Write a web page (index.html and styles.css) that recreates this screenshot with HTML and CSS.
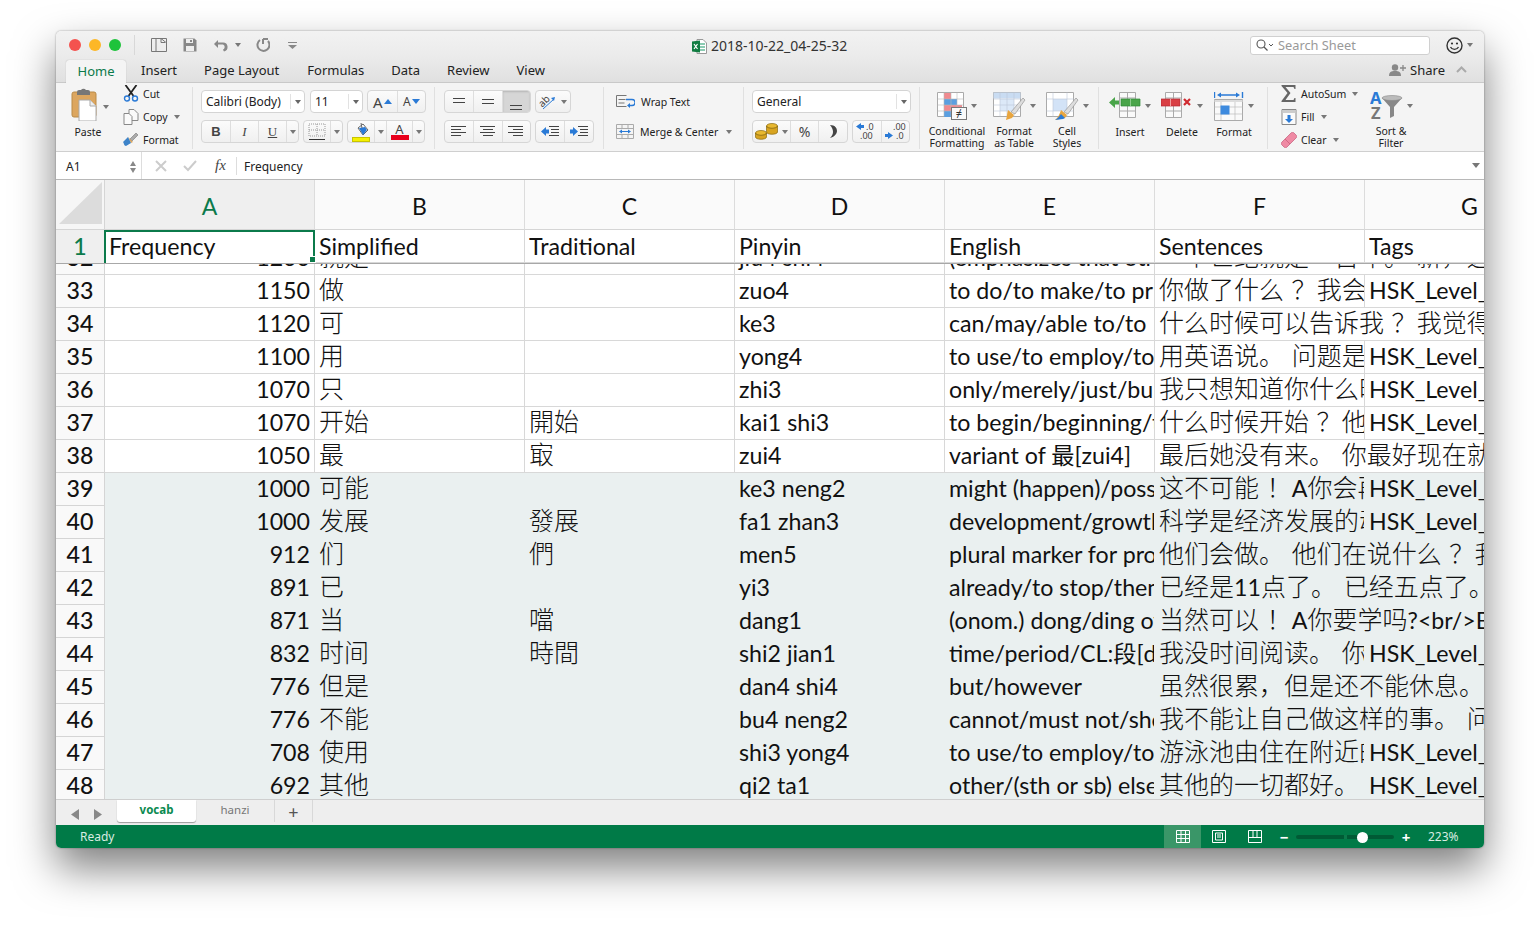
FILE: index.html
```html
<!DOCTYPE html>
<html lang="zh-CN">
<head>
  <meta charset="utf-8" />
  <title>2018-10-22_04-25-32</title>
  <link rel="stylesheet" href="styles.css">
</head>
<body>
<div class="window">

  <div class="titlebar">
    <div class="lights">
      <span class="light red"></span><span class="light yellow"></span><span class="light green"></span>
    </div>
    <div class="quick">
      <svg width="16" height="14" viewBox="0 0 16 14"><path d="M.5.5h15v13H.5zM5 .5v13M10 .5v4l4 0M10 .5l5 4" fill="none" stroke="#777"/></svg>
      <svg class="q-save" width="14" height="14" viewBox="0 0 14 14"><path d="M.5.5h11l2 2v11H.5z" fill="#888"/><path d="M3 1h7v4H3z" fill="#eee"/><path d="M3 8h8v5H3z" fill="#eee"/><path d="M7 2h2v2H7z" fill="#888"/></svg>
      <svg class="q-undo" width="16" height="13" viewBox="0 0 16 13"><path d="M1 5l4-4v2.6h5a4.500 4.500 0 0 1 1 8.900l-1-1.700a3 3 0 0 0 0-5.400H5V9z" fill="#888"/></svg>
      <span class="caret q-caret"></span>
      <svg class="q-redo" width="15" height="15" viewBox="0 0 15 15"><path d="M8 1v5M8 1h5M13 3a6 6 0 1 1-8-1" fill="none" stroke="#888" stroke-width="2"/></svg>
      <svg class="q-more" width="9" height="7" viewBox="0 0 9 7"><path d="M0 0h9v1H0zM0 3h9L4.500 7z" fill="#888"/></svg>
    </div>
    <div class="doc-title">
      <svg width="15" height="15" viewBox="0 0 15 15"><path d="M5 .5h6l3.500 3.500v10.500H5z" fill="#fff" stroke="#999"/><path d="M8 5h5M8 8h5M8 11h5" stroke="#6b9" stroke-width="1.500"/><path d="M0 2.500l8-1v12l-8-1z" fill="#107c41"/><path d="M2 5l3.500 5M5.500 5L2 10" stroke="#fff" stroke-width="1.200"/></svg>
      <span>2018-10-22_04-25-32</span>
    </div>
    <div class="title-right">
      <div class="search">
        <svg width="17" height="12" viewBox="0 0 17 12"><circle cx="5" cy="5" r="4" fill="none" stroke="#555" stroke-width="1.100"/><path d="M8 8l3.500 3.500" stroke="#555" stroke-width="1.300"/><path d="M13 5l2 2 2-2" fill="none" stroke="#555"/></svg>
        <span>Search Sheet</span>
      </div>
      <svg class="smile" width="17" height="17" viewBox="0 0 17 17"><circle cx="8.500" cy="8.500" r="7.500" fill="none" stroke="#333" stroke-width="1.400"/><circle cx="6" cy="6.500" r="1.100" fill="#333"/><circle cx="11" cy="6.500" r="1.100" fill="#333"/><path d="M4.500 10a4.500 4.500 0 0 0 8 0" fill="none" stroke="#333" stroke-width="1.300"/></svg>
      <span class="caret"></span>
    </div>
  </div>

  <div class="tabbar">
    <div class="tab active">Home</div>
    <div class="tab t-insert">Insert</div>
    <div class="tab t-layout">Page Layout</div>
    <div class="tab t-formulas">Formulas</div>
    <div class="tab t-data">Data</div>
    <div class="tab t-review">Review</div>
    <div class="tab t-view">View</div>
    <div class="share">
      <svg width="17" height="12" viewBox="0 0 17 12"><circle cx="6" cy="3.500" r="3.200" fill="#888"/><path d="M0 12c0-4 2-5 6-5s6 1 6 5z" fill="#888"/><path d="M14 1v6M11 4h6" stroke="#888" stroke-width="1.300"/></svg>
      <span>Share</span>
      <svg class="chev" width="11" height="7" viewBox="0 0 11 7"><path d="M1 6l4.500-4.500L10 6" fill="none" stroke="#aaa" stroke-width="2"/></svg>
    </div>
  </div>

  <div class="ribbon">
    <!-- clipboard -->
    <div class="group g-clip">
      <div class="big paste">
        <div class="big-icon">
          <svg width="26" height="34" viewBox="0 0 26 34"><rect x="1" y="5" width="24" height="25" rx="2" fill="#dca65f" stroke="#b98a48"/><path d="M6 5a2 2 0 0 1 2-2h2a3 3 0 0 1 5 0h2a2 2 0 0 1 2 2v3H6z" fill="#777"/><path d="M8 13h11l6 6v15H8z" fill="#fff" stroke="#aaa"/><path d="M19 13v6h6" fill="#eee" stroke="#aaa"/></svg>
        </div>
        <div class="label">Paste</div>
      </div>
      <span class="caret paste-caret"></span>
      <div class="stack">
        <div class="item"><svg width="15" height="17" viewBox="0 0 15 17"><path d="M2 0l8 11M13 0L5 11" stroke="#222" stroke-width="1.800"/><circle cx="3.500" cy="13.500" r="2.500" fill="none" stroke="#2a7ad6" stroke-width="1.400"/><circle cx="11.500" cy="13.500" r="2.500" fill="none" stroke="#2a7ad6" stroke-width="1.400"/></svg><span>Cut</span></div>
        <div class="item"><svg width="15" height="16" viewBox="0 0 15 16"><path d="M5.500.5h5l4 4v7h-9z" fill="#fafafa" stroke="#888"/><path d="M.5 4.500h5l3 3v8h-8z" fill="#fafafa" stroke="#888"/></svg><span>Copy</span><span class="caret"></span></div>
        <div class="item"><svg width="16" height="15" viewBox="0 0 16 15"><path d="M7 7l6-6 2 2-6 6z" fill="#aaa" stroke="#777" stroke-width=".6"/><path d="M5 5l5 5-2 1z" fill="#dca65f"/><path d="M5 5L0 10c1 1 1 4 3 4l5-3z" fill="#3d83c9"/></svg><span>Format</span></div>
      </div>
    </div>

    <!-- font -->
    <div class="group g-font">
      <div class="tools">
        <div class="select w-font"><span>Calibri (Body)</span><i class="sel-arrow"></i></div>
        <div class="select w-size"><span>11</span><i class="sel-arrow"></i></div>
        <div class="btns">
          <div class="b w-grow"><span class="aa big-a">A</span><i class="tri up"></i></div>
          <div class="b w-grow"><span class="aa">A</span><i class="tri down"></i></div>
        </div>
      </div>
      <div class="tools">
        <div class="btns">
          <div class="b w28 fmt"><b>B</b></div>
          <div class="b w28 fmt"><em>I</em></div>
          <div class="b w28 fmt"><u>U</u></div>
          <div class="b w12"><span class="caret"></span></div>
        </div>
        <div class="btns">
          <div class="b w26"><svg width="18" height="18" viewBox="0 0 18 18"><path d="M1 1h16v12H1zM9 1v12M1 7h16" fill="none" stroke="#999" stroke-dasharray="1 1"/><path d="M1 16.500h16" stroke="#333"/></svg></div>
          <div class="b w12"><span class="caret"></span></div>
        </div>
        <div class="btns">
          <div class="b w26"><svg width="18" height="20" viewBox="0 0 18 20"><path d="M6 6l5-4 5 6-5 5z" fill="#fff" stroke="#666"/><path d="M7 6l6-1 2 3-4 5z" fill="#2a7ad6"/><path d="M9 1l1 5" stroke="#666"/><rect x=".5" y="15.500" width="17" height="4" fill="#f5f000" stroke="#c8c400"/></svg></div>
          <div class="b w12"><span class="caret"></span></div>
          <div class="b w26 color-a"><span class="a-red">A</span><i class="red-bar"></i></div>
          <div class="b w12"><span class="caret"></span></div>
        </div>
      </div>
    </div>

    <!-- alignment -->
    <div class="group g-align">
      <div class="tools">
        <div class="btns">
          <div class="b w29"><svg width="14" height="8" viewBox="0 0 14 8"><path d="M1 .5h12M1 4.500h12" stroke="#444"/></svg></div>
          <div class="b w29"><svg width="14" height="6" viewBox="0 0 14 6"><path d="M1 .5h12M1 4.500h12" stroke="#444"/></svg></div>
          <div class="b w29 pressed"><svg class="low" width="14" height="8" viewBox="0 0 14 8"><path d="M1 3.500h12M1 7.500h12" stroke="#444"/></svg></div>
        </div>
        <div class="btns">
          <div class="b w36"><svg width="19" height="16" viewBox="0 0 19 16"><text class="ab" x="0" y="10" transform="rotate(-45 6 8)">ab</text><path d="M4 15L15 5" stroke="#2a7ad6"/><path d="M16 3l-1 4-3-3z" fill="#2a7ad6"/></svg><span class="caret"></span></div>
        </div>
      </div>
      <div class="tools">
        <div class="btns">
          <div class="b w29"><svg width="16" height="11" viewBox="0 0 16 11"><path d="M0 .5h15M0 3.500h10M0 6.500h15M0 9.500h10" stroke="#444"/></svg></div>
          <div class="b w29"><svg width="16" height="11" viewBox="0 0 16 11"><path d="M0 .5h15M3 3.500h10M0 6.500h15M3 9.500h10" stroke="#444"/></svg></div>
          <div class="b w29"><svg width="16" height="11" viewBox="0 0 16 11"><path d="M0 .5h15M5 3.500h10M0 6.500h15M5 9.500h10" stroke="#444"/></svg></div>
        </div>
        <div class="btns">
          <div class="b w29"><svg width="18" height="11" viewBox="0 0 18 11"><path d="M0 5.500L5 1v2.500h3v4H5V10z" fill="#2a7ad6"/><path d="M8 .5h10M10 3.500h8M10 6.500h8M8 9.500h10" stroke="#444"/></svg></div>
          <div class="b w29"><svg width="18" height="11" viewBox="0 0 18 11"><path d="M8 5.500L3 1v2.500H0v4h3V10z" fill="#2a7ad6"/><path d="M8 .5h10M10 3.500h8M10 6.500h8M8 9.500h10" stroke="#444"/></svg></div>
        </div>
      </div>
    </div>

    <!-- wrap and merge -->
    <div class="group g-wrap">
      <div class="wide-item"><svg width="19" height="13" viewBox="0 0 19 13"><path d="M.5.5h10M.5.5v11h10M2.500 4.500h7M2.500 8h6" fill="none" stroke="#777"/><path d="M10 4.500h6a2.500 2.500 0 0 1 0 6h-3" fill="none" stroke="#2a7ad6" stroke-width="1.300"/><path d="M14 8v5l-3-2.500z" fill="#2a7ad6"/></svg><span>Wrap Text</span></div>
      <div class="wide-item"><svg width="18" height="15" viewBox="0 0 18 15"><path d="M.5.5h17v14H.5zM.5 4.500h17M.5 10.500h17M6 .5v4M12 .5v4M6 10.500v4M12 10.500v4" fill="none" stroke="#aaa"/><path d="M4 7.500h10" stroke="#2a7ad6"/><path d="M3 7.500l3-2v4zM15 7.500l-3-2v4z" fill="#2a7ad6"/></svg><span>Merge &amp; Center</span><span class="caret"></span></div>
    </div>

    <!-- number -->
    <div class="group g-number">
      <div class="tools">
        <div class="select w-general"><span>General</span><i class="sel-arrow"></i></div>
      </div>
      <div class="tools">
        <div class="btns">
          <div class="b w38 coins"><svg width="23" height="17" viewBox="0 0 23 17"><ellipse cx="17" cy="3" rx="5.500" ry="2.500" fill="#e8b830" stroke="#8a6a10" stroke-width=".7"/><path d="M11.500 3v6c0 3 11 3 11 0V3c0 3-11 3-11 0z" fill="#d8a420" stroke="#8a6a10" stroke-width=".7"/><ellipse cx="6" cy="10" rx="5.500" ry="2.500" fill="#e8b830" stroke="#8a6a10" stroke-width=".7"/><path d="M.5 10v4c0 3 11 3 11 0v-4c0 3-11 3-11 0z" fill="#d8a420" stroke="#8a6a10" stroke-width=".7"/></svg><span class="caret"></span></div>
          <div class="b w29 pct">%</div>
          <div class="b w29"><svg width="8" height="13" viewBox="0 0 8 13"><path d="M1 0c5 0 7 3 7 6 0 3-3 6-7 7 2-2 3-4 3-6S3 2 1 0z" fill="#444"/></svg></div>
        </div>
        <div class="btns">
          <div class="b w29"><svg width="21" height="17" viewBox="0 0 21 17"><path d="M0 3.500L5 0v2h3v3H5v2z" fill="#2a7ad6"/><text class="dec" x="10" y="7">.0</text><text class="dec" x="4" y="16">.00</text></svg></div>
          <div class="b w29"><svg width="21" height="17" viewBox="0 0 21 17"><text class="dec" x="8" y="7">.00</text><path d="M8 12.500L3 9v2H0v3h3v2z" fill="#2a7ad6"/><text class="dec" x="11" y="16">.0</text></svg></div>
        </div>
      </div>
    </div>

    <!-- styles -->
    <div class="group g-styles">
      <div class="big w-cond">
        <div class="big-icon">
          <svg width="30" height="30" viewBox="0 0 30 30"><path d="M.5.500h26v24H.5z" fill="#fff" stroke="#aaa"/><path d="M7 1h7v6H7z" fill="#f08a8f"/><path d="M7 7h13v6H7z" fill="#5b9fe0"/><path d="M7 13h18v6H7z" fill="#f08a8f"/><path d="M7 19h7v6H7z" fill="#5b9fe0"/><path d="M7 .5v24M14 .5v24M20 .5v24M.5 7h26M.5 13h26M.5 19h26" stroke="#bbb" stroke-width=".6"/><rect x="14.500" y="15.500" width="15" height="12" fill="#fafafa" stroke="#777"/><text class="ne" x="22" y="25">≠</text></svg>
          <span class="caret"></span>
        </div>
        <div class="label">Conditional<br>Formatting</div>
      </div>
      <div class="big w-table">
        <div class="big-icon">
          <svg width="33" height="30" viewBox="0 0 33 30"><path d="M.5.500h27v24H.5z" fill="#fff" stroke="#aaa"/><path d="M.5.500h27v6H.5z" fill="#c9dcf2"/><path d="M7 7h14v12H7z" fill="#dce9f8"/><path d="M7 .5v24M14 .5v24M21 .5v24M.5 7h27M.5 13h27M.5 19h27" stroke="#bcc8d6" stroke-width=".6"/><path d="M18 20L30 6l2 2-10 14z" fill="#ddd" stroke="#888" stroke-width=".6"/><path d="M15 18l6 5-2 3-6 2c1-3 1-7 2-10z" fill="#e8a53e"/></svg>
          <span class="caret"></span>
        </div>
        <div class="label">Format<br>as Table</div>
      </div>
      <div class="big w-cell">
        <div class="big-icon">
          <svg width="33" height="30" viewBox="0 0 33 30"><path d="M.5.500h27v24H.5z" fill="#fff" stroke="#aaa"/><path d="M7 7h14v12H7z" fill="#d3e3f7"/><path d="M7 .5v24M21 .5v24M.5 7h27M.5 19h27" stroke="#bcc8d6" stroke-width=".6"/><path d="M18 20L30 6l2 2-10 14z" fill="#ddd" stroke="#888" stroke-width=".6"/><path d="M15 18l6 5-2 3-10 2c3-2 5-7 6-10z" fill="#e8a53e"/><path d="M9 28c2-1 4-3 6-6l4 4-2 1z" fill="#2a7ad6"/></svg>
          <span class="caret"></span>
        </div>
        <div class="label">Cell<br>Styles</div>
      </div>
    </div>

    <!-- cells -->
    <div class="group g-cells">
      <div class="big w-cells">
        <div class="big-icon">
          <svg width="32" height="26" viewBox="0 0 32 26"><path d="M10.500.500h16v25h-16zM18.500.500v25M10.500 6h16M10.500 19h16" fill="#fafafa" stroke="#aaa"/><path d="M12 7h19v7H12z" fill="#4aa54a" stroke="#2f8a37" stroke-width=".7"/><path d="M21.500 7v7" stroke="#8ccb8c"/><path d="M0 10.500L6 5v3.500h4v4H6V16z" fill="#4aa54a"/></svg>
          <span class="caret"></span>
        </div>
        <div class="label">Insert</div>
      </div>
      <div class="big w-cells">
        <div class="big-icon">
          <svg width="32" height="26" viewBox="0 0 32 26"><path d="M4.500.500h16v25h-16zM12.500.500v25M4.500 6h16M4.500 19h16" fill="#fafafa" stroke="#aaa"/><path d="M0 7h19v7H0z" fill="#d94045" stroke="#b52a30" stroke-width=".7"/><path d="M9.500 7v7" stroke="#f0a0a0"/><path d="M23 7l6 6M29 7l-6 6" stroke="#d02a30" stroke-width="2.200"/></svg>
          <span class="caret"></span>
        </div>
        <div class="label">Delete</div>
      </div>
      <div class="big w-cells">
        <div class="big-icon">
          <svg width="30" height="30" viewBox="0 0 30 30"><path d="M.5 0v6M28.500 0v6M5 3h19" stroke="#2a7ad6" stroke-width="1.400"/><path d="M3 3l4-2.500v5zM26 3l-4-2.500v5z" fill="#2a7ad6"/><path d="M.5 7.500h28v21H.5z" fill="#fafafa" stroke="#aaa"/><path d="M.5 8h28v2H.5z" fill="#ddd"/><path d="M7 10v18M21 10v18M.5 15h28M.5 22h28" stroke="#bbb" stroke-width=".7"/><rect x="6.500" y="13.500" width="9" height="9" fill="#3d8ade"/></svg>
          <span class="caret"></span>
        </div>
        <div class="label">Format</div>
      </div>
    </div>

    <!-- editing -->
    <div class="group g-edit">
      <div class="stack edit-stack">
        <div class="item"><svg width="15" height="17" viewBox="0 0 15 17"><path d="M0 0h14v4h-1l-1-2H4l5 6-5 7h8l1-2h1v4H0v-1l6-8-6-7z" fill="#666"/></svg><span>AutoSum</span><span class="caret"></span></div>
        <div class="item"><svg width="15" height="16" viewBox="0 0 15 16"><path d="M.5.500h14v15H.5z" fill="#fafafa" stroke="#888"/><path d="M1 1h13v3H1z" fill="#ccc"/><path d="M6 6h3v4h2.500l-4 4-4-4H6z" fill="#2a7ad6"/></svg><span>Fill</span><span class="caret"></span></div>
        <div class="item"><svg width="16" height="16" viewBox="0 0 16 16"><path d="M1 10L10 1c1-1 2-1 3 0l2 2c1 1 1 2 0 3l-9 9c-1 1-2 1-3 0l-2-2c-1-1-1-2 0-3z" fill="#ef8aa4" stroke="#c35a78" stroke-width=".7"/><path d="M4 7l5 5" stroke="#c35a78" stroke-width=".7"/></svg><span>Clear</span><span class="caret"></span></div>
      </div>
      <div class="big w-sort">
        <div class="big-icon">
          <svg width="33" height="28" viewBox="0 0 33 28"><text class="az blue" x="0" y="12">A</text><text class="az" x="1" y="27">Z</text><path d="M12 6h20l-8 9v9l-4 2V15z" fill="#888"/><ellipse cx="22" cy="6" rx="10" ry="2.500" fill="#bbb" stroke="#888" stroke-width=".6"/></svg>
          <span class="caret"></span>
        </div>
        <div class="label">Sort &amp;<br>Filter</div>
      </div>
    </div>
  </div>

  <div class="formulabar">
    <div class="namebox">
      <span>A1</span>
      <span class="stepper"><i class="tri-up"></i><i class="tri-down"></i></span>
    </div>
    <div class="fb-actions">
      <svg width="12" height="12" viewBox="0 0 12 12"><path d="M1 1l10 10M11 1L1 11" stroke="#ccc" stroke-width="2"/></svg>
      <svg width="14" height="12" viewBox="0 0 14 12"><path d="M1 6l4 4 8-9" fill="none" stroke="#ccc" stroke-width="2"/></svg>
      <span class="fx">fx</span>
    </div>
    <div class="fb-text">Frequency</div>
    <span class="fb-caret"></span>
  </div>

  <div class="colheads">
    <div class="corner"><svg width="48" height="46" viewBox="0 0 48 46"><path d="M46 2v42H3z" fill="#dcdcdc"/></svg></div>
    <div class="ch sel">A</div>
    <div class="ch">B</div>
    <div class="ch">C</div>
    <div class="ch">D</div>
    <div class="ch">E</div>
    <div class="ch">F</div>
    <div class="ch last">G</div>
  </div>

  <div class="row frozen">
    <div class="rh sel">1</div>
    <div class="c a1">Frequency</div>
    <div class="c">Simplified</div>
    <div class="c">Traditional</div>
    <div class="c">Pinyin</div>
    <div class="c">English</div>
    <div class="c">Sentences</div>
    <div class="c g">Tags</div>
  </div>

  <div class="sheet">
    <div class="row partial"><div class="rh">32</div><div class="c num">1200</div><div class="c cjk">就是</div><div class="c"></div><div class="c">jiu4 shi4</div><div class="c">(emphasizes that oth</div><div class="c cjk wide">一个世纪就是一百年。 新，这</div></div>
    <div class="row"><div class="rh">33</div><div class="c num">1150</div><div class="c cjk">做</div><div class="c"></div><div class="c">zuo4</div><div class="c">to do/to make/to pr</div><div class="c cjk">你做了什么<i class="mid">？</i> 我会</div><div class="c g">HSK_Level_1</div></div>
    <div class="row"><div class="rh">34</div><div class="c num">1120</div><div class="c cjk">可</div><div class="c"></div><div class="c">ke3</div><div class="c">can/may/able to/to</div><div class="c cjk wide">什么时候可以告诉我<i class="mid">？</i> 我觉得</div></div>
    <div class="row"><div class="rh">35</div><div class="c num">1100</div><div class="c cjk">用</div><div class="c"></div><div class="c">yong4</div><div class="c">to use/to employ/to</div><div class="c cjk">用英语说。 问题是</div><div class="c g">HSK_Level_1</div></div>
    <div class="row"><div class="rh">36</div><div class="c num">1070</div><div class="c cjk">只</div><div class="c"></div><div class="c">zhi3</div><div class="c">only/merely/just/bu</div><div class="c cjk">我只想知道你什么时候</div><div class="c g">HSK_Level_1</div></div>
    <div class="row"><div class="rh">37</div><div class="c num">1070</div><div class="c cjk">开始</div><div class="c cjk">開始</div><div class="c">kai1 shi3</div><div class="c">to begin/beginning/to</div><div class="c cjk">什么时候开始<i class="mid">？</i> 他</div><div class="c g">HSK_Level_1</div></div>
    <div class="row"><div class="rh">38</div><div class="c num">1050</div><div class="c cjk">最</div><div class="c cjk">㝡</div><div class="c">zui4</div><div class="c">variant of 最[zui4]</div><div class="c cjk wide">最后她没有来。 你最好现在就</div></div>
    <div class="row shade"><div class="rh">39</div><div class="c num">1000</div><div class="c cjk">可能</div><div class="c"></div><div class="c">ke3 neng2</div><div class="c">might (happen)/possible</div><div class="c cjk">这不可能<i class="mid">！</i> <span class="lat">A</span>你会再</div><div class="c g">HSK_Level_1</div></div>
    <div class="row shade"><div class="rh">40</div><div class="c num">1000</div><div class="c cjk">发展</div><div class="c cjk">發展</div><div class="c">fa1 zhan3</div><div class="c">development/growth</div><div class="c cjk">科学是经济发展的动力</div><div class="c g">HSK_Level_1</div></div>
    <div class="row shade"><div class="rh">41</div><div class="c num">912</div><div class="c cjk">们</div><div class="c cjk">們</div><div class="c">men5</div><div class="c">plural marker for pro</div><div class="c cjk wide">他们会做。 他们在说什么<i class="mid">？</i> 我</div></div>
    <div class="row shade"><div class="rh">42</div><div class="c num">891</div><div class="c cjk">已</div><div class="c"></div><div class="c">yi3</div><div class="c">already/to stop/then</div><div class="c cjk wide">已经是<span class="lat">11</span>点了。 已经五点了。</div></div>
    <div class="row shade"><div class="rh">43</div><div class="c num">871</div><div class="c cjk">当</div><div class="c cjk">噹</div><div class="c">dang1</div><div class="c">(onom.) dong/ding of</div><div class="c cjk wide">当然可以<i class="mid">！</i> <span class="lat">A</span>你要学吗<span class="lat">?&lt;br/&gt;B</span>我</div></div>
    <div class="row shade"><div class="rh">44</div><div class="c num">832</div><div class="c cjk">时间</div><div class="c cjk">時間</div><div class="c">shi2 jian1</div><div class="c">time/period/CL:段[duan4]</div><div class="c cjk">我没时间阅读。 你</div><div class="c g">HSK_Level_1</div></div>
    <div class="row shade"><div class="rh">45</div><div class="c num">776</div><div class="c cjk">但是</div><div class="c"></div><div class="c">dan4 shi4</div><div class="c">but/however</div><div class="c cjk wide">虽然很累，但是还不能休息。</div></div>
    <div class="row shade"><div class="rh">46</div><div class="c num">776</div><div class="c cjk">不能</div><div class="c"></div><div class="c">bu4 neng2</div><div class="c">cannot/must not/should</div><div class="c cjk wide">我不能让自己做这样的事。 问</div></div>
    <div class="row shade"><div class="rh">47</div><div class="c num">708</div><div class="c cjk">使用</div><div class="c"></div><div class="c">shi3 yong4</div><div class="c">to use/to employ/to</div><div class="c cjk">游泳池由住在附近的</div><div class="c g">HSK_Level_1</div></div>
    <div class="row shade"><div class="rh">48</div><div class="c num">692</div><div class="c cjk">其他</div><div class="c"></div><div class="c">qi2 ta1</div><div class="c">other/(sth or sb) else</div><div class="c cjk">其他的一切都好。</div><div class="c g">HSK_Level_1</div></div>
  </div>

  <div class="sheetbar">
    <div class="nav">
      <svg width="8" height="11" viewBox="0 0 8 11"><path d="M8 0v11L0 5.500z" fill="#888"/></svg>
      <svg width="8" height="11" viewBox="0 0 8 11"><path d="M0 0v11l8-5.500z" fill="#888"/></svg>
    </div>
    <div class="sheet-tab active">vocab</div>
    <div class="sheet-tab">hanzi</div>
    <div class="sheet-add">+</div>
  </div>

  <div class="statusbar">
    <span class="ready">Ready</span>
    <div class="views">
      <div class="view on"><svg width="14" height="13" viewBox="0 0 14 13"><path d="M.5.500h13v12H.5zM5 .5v12M9.500.500v12M.5 4.500h13M.5 8.500h13" fill="none" stroke="#fff"/></svg></div>
      <div class="view"><svg width="14" height="13" viewBox="0 0 14 13"><path d="M.5.500h13v12H.5z" fill="none" stroke="#fff"/><path d="M3.500 3h7v7h-7zM5 5h4M5 7h4" fill="none" stroke="#fff"/></svg></div>
      <div class="view last"><svg width="14" height="13" viewBox="0 0 14 13"><path d="M.5.500h13v12H.5zM.5 7.500h13M5 .5v7M9 .5v7" fill="none" stroke="#fff"/></svg></div>
    </div>
    <div class="zoom">
      <span class="zbtn">−</span>
      <div class="track"><i class="tick"></i><i class="thumb"></i></div>
      <span class="zbtn">+</span>
      <span class="pct-label">223%</span>
    </div>
  </div>
</div>
</body>
</html>
```

FILE: styles.css
```css
* {
  box-sizing: border-box;
}

html, body {
  margin: 0;
  height: 100%;
  background: #fff;
  overflow: hidden;
}

body {
  padding: 31px 56px 0;
  font-family: "Noto Sans", sans-serif;
  color: #222;
}

.window {
  width: 1428px;
  height: 817px;
  display: flex;
  flex-direction: column;
  border-radius: 5px;
  overflow: hidden;
  background: #f4f4f4;
  box-shadow: 0 20px 42px rgba(0,0,0,.5), 0 0 2px rgba(0,0,0,.4);
}

/* title bar */
.titlebar {
  height: 25px;
  flex: none;
  display: flex;
  align-items: center;
  position: relative;
  padding-top: 3px;
  background: linear-gradient(#f2f2f2, #ebebeb);
}

.lights {
  display: flex;
  gap: 8px;
  padding-left: 13px;
  width: 79px;
  height: 20px;
  align-items: center;
  border-right: 1px solid #d8d8d8;
}

.light {
  width: 12px;
  height: 12px;
  border-radius: 50%;
}
.light.red { background: #f4524f; }
.light.yellow { background: #fdb726; }
.light.green { background: #1ec33b; }

.quick {
  display: flex;
  align-items: center;
  padding-left: 16px;
}
.q-save { margin-left: 16px; }
.q-undo { margin-left: 16px; }
.q-caret { margin-left: 6px; }
.q-redo { margin-left: 14px; }
.q-more { margin-left: 18px; }

.doc-title {
  position: absolute;
  left: 636px;
  top: 7px;
  display: flex;
  align-items: center;
  gap: 4px;
  font-size: 14px;
  line-height: 16px;
  color: #333;
}

.title-right {
  margin-left: auto;
  display: flex;
  align-items: center;
  padding-right: 11px;
}

.search {
  width: 180px;
  height: 19px;
  display: flex;
  align-items: center;
  gap: 5px;
  padding-left: 5px;
  background: #fff;
  border: 1px solid #d0d0d0;
  border-radius: 3px;
  font-size: 12.800px;
  color: #999;
}

.smile { margin: 0 4px 0 16px; }

.caret {
  display: inline-block;
  width: 0;
  height: 0;
  border-left: 3px solid transparent;
  border-right: 3px solid transparent;
  border-top: 4px solid #777;
  flex: none;
}

/* tabs */
.tabbar {
  height: 27px;
  flex: none;
  display: flex;
  align-items: flex-end;
  padding-left: 10px;
  background: linear-gradient(#ebebeb, #e0e0e0);
  border-bottom: 1px solid #c9c9c9;
  font-size: 13px;
}

.tab {
  height: 23px;
  line-height: 22px;
  color: #222;
  white-space: nowrap;
}
.tab.active {
  width: 60px;
  text-align: center;
  color: #0b7a4b;
  background: #f4f4f4;
  border-radius: 3px 3px 0 0;
  box-shadow: 0 0 1px rgba(0,0,0,.3);
  margin-bottom: -1px;
  line-height: 23px;
}
.t-insert { margin-left: 15px; }
.t-layout { margin-left: 27px; }
.t-formulas { margin-left: 28px; }
.t-data { margin-left: 27px; }
.t-review { margin-left: 27px; }
.t-view { margin-left: 27px; }

.share {
  margin-left: auto;
  height: 25px;
  padding-right: 17px;
  display: flex;
  align-items: center;
  gap: 4px;
  font-size: 13px;
  color: #222;
}
.chev { margin-left: 7px; }

/* ribbon */
.ribbon {
  height: 69px;
  flex: none;
  display: flex;
  padding-top: 4px;
  background: #f4f4f4;
  border-bottom: 1px solid #cfcfcf;
  font-size: 10.500px;
  color: #222;
}

.group {
  height: 62px;
  border-right: 1px solid #e0e0e0;
  flex: none;
  display: flex;
}

.g-clip { width: 137px; padding-left: 14px; }
.g-font, .g-align, .g-number {
  flex-direction: column;
  gap: 7px;
  padding-top: 3px;
}
.g-font { width: 242px; padding-left: 8px; }
.g-align { width: 169px; padding-left: 9px; }
.g-wrap {
  width: 140px;
  padding: 3px 0 0 12px;
  flex-direction: column;
  gap: 7px;
}
.g-number { width: 176px; padding-left: 8px; }
.g-styles { width: 179px; padding-left: 8px; }
.g-cells { width: 169px; padding-left: 5px; }
.g-edit { width: 216px; border-right: 0; padding-left: 13px; }

.tools {
  display: flex;
  gap: 4px;
  height: 23px;
}

.select {
  display: flex;
  align-items: center;
  justify-content: space-between;
  height: 23px;
  padding-left: 4px;
  background: #fff;
  border: 1px solid #d4d4d4;
  border-radius: 4px;
  font-size: 12px;
}
.w-font { width: 104px; margin-right: 1px; }
.w-size { width: 53px; }
.w-general { width: 159px; }

.sel-arrow {
  width: 14px;
  height: 15px;
  border-left: 1px solid #e2e2e2;
  position: relative;
}
.sel-arrow::after {
  content: "";
  position: absolute;
  left: 4px;
  top: 6px;
  border-left: 3px solid transparent;
  border-right: 3px solid transparent;
  border-top: 4px solid #666;
}

.btns {
  display: flex;
  height: 23px;
  background: linear-gradient(#fbfbfb, #f0f0f0);
  border: 1px solid #d6d6d6;
  border-radius: 4px;
  overflow: hidden;
}

.b {
  height: 21px;
  display: flex;
  align-items: center;
  justify-content: center;
  gap: 3px;
  border-left: 1px solid #dedede;
  color: #444;
}
.b:first-child { border-left: 0; }
.w12 { width: 12px; }
.w26 { width: 26px; }
.w28 { width: 28px; }
.w29 { width: 28.330px; }
.w36 { width: 34px; }
.w38 { width: 37px; }
.w-grow { width: 28.500px; gap: 1px; }

.pressed {
  background: #d6d6d6;
  box-shadow: inset 0 1px 2px rgba(0,0,0,.15);
}
.low { margin-top: 8px; }

.aa { font-size: 12px; }
.big-a { font-size: 15px; }

.tri {
  border-left: 4px solid transparent;
  border-right: 4px solid transparent;
}
.tri.up { border-bottom: 5px solid #2a7ad6; }
.tri.down { border-top: 5px solid #2a7ad6; }

.fmt {
  font-size: 13px;
  font-family: "Liberation Serif", serif;
}
.fmt b { font-family: "Liberation Sans", sans-serif; }

.color-a {
  flex-direction: column;
  gap: 0;
}
.a-red { font-size: 13px; line-height: 12px; }
.red-bar {
  width: 18px;
  height: 5px;
  background: #e8001c;
}

.ab { font: 10px "Noto Sans", sans-serif; fill: #444; }
.dec { font: 9px "Noto Sans", sans-serif; fill: #444; }
.ne { font: 11px "Noto Sans", sans-serif; fill: #333; text-anchor: middle; }
.az { font: 700 16.500px "Noto Sans", sans-serif; fill: #777; }
.az.blue { fill: #2a7ad6; }

.pct { font-size: 14px; }
.coins { gap: 4px; }

.wide-item {
  height: 23px;
  display: flex;
  align-items: center;
  font-size: 10.500px;
  white-space: nowrap;
}
.wide-item svg { margin-right: 6px; }
.wide-item .caret { margin-left: 8px; }

.big {
  display: flex;
  flex-direction: column;
  align-items: center;
  flex: none;
}
.big-icon {
  height: 38px;
  display: flex;
  align-items: flex-start;
  gap: 4px;
  padding-top: 5px;
}
.big-icon .caret { margin-top: 12px; }
.label {
  text-align: center;
  line-height: 12px;
  white-space: nowrap;
  padding-top: 1px;
}
.w-cond { width: 58px; }
.w-table { width: 58px; margin-left: -1px; }
.w-cell { width: 46px; margin-left: 1px; }
.w-cells { width: 52px; }
.w-sort { width: 50px; margin-left: -1px; }

.paste { width: 36px; }
.paste .big-icon { padding-top: 0; height: 38px; }
.paste .big-icon svg { margin-right: 9px; }
.paste-caret { margin: 18px 0 0 -3px; }

.stack {
  margin: -5px 0 0 14px;
  height: 69px;
  display: flex;
  flex-direction: column;
}
.item {
  height: 23px;
  display: flex;
  align-items: center;
  white-space: nowrap;
}
.item svg { margin-right: 4px; width: 16px; flex: none; }
.item .caret { margin-left: 6px; }
.edit-stack { margin-left: 0; width: 86px; }

/* formula bar */
.formulabar {
  height: 28px;
  flex: none;
  display: flex;
  align-items: center;
  position: relative;
  background: #fff;
  border-bottom: 1px solid #b8b8b8;
  font-size: 12px;
}

.namebox {
  width: 86px;
  height: 100%;
  padding: 2px 5px 0 10px;
  display: flex;
  align-items: center;
  justify-content: space-between;
  border-right: 1px solid #ddd;
}

.stepper {
  display: flex;
  flex-direction: column;
  gap: 2px;
}
.tri-up, .tri-down {
  border-left: 3px solid transparent;
  border-right: 3px solid transparent;
}
.tri-up { border-bottom: 5px solid #888; }
.tri-down { border-top: 5px solid #888; }

.fb-actions {
  width: 95px;
  height: 18px;
  padding-left: 13px;
  display: flex;
  align-items: center;
  gap: 16px;
  border-right: 1px solid #ddd;
}
.fx {
  margin-left: 2px;
  font: italic 15px "Liberation Serif", serif;
  color: #444;
}
.fb-text { padding: 1px 0 0 7px; }
.fb-caret {
  position: absolute;
  right: 4px;
  top: 11px;
  border-left: 4px solid transparent;
  border-right: 4px solid transparent;
  border-top: 5px solid #777;
}

/* sheet */
.colheads {
  height: 50px;
  flex: none;
  display: flex;
  background: #fff;
}

.corner {
  width: 49px;
  background: #f6f6f6;
  border-right: 1px solid #d5d5d5;
  border-bottom: 1px solid #d5d5d5;
}

.ch {
  width: 210px;
  padding-top: 9px;
  text-align: center;
  font: 23px/34px Lato, sans-serif;
  color: #111;
  background: #fafafa;
  border-right: 1px solid #dcdcdc;
  border-bottom: 1px solid #d5d5d5;
}
.ch.sel {
  color: #0b7a4b;
  background: #efefef;
}
.ch.last {
  width: 119px;
  padding-left: 96px;
  text-align: left;
  border-right: 0;
}

.row {
  height: 33px;
  flex: none;
  display: flex;
  background: #fff;
  font: 23.200px/31px Lato, "Noto Sans CJK SC", sans-serif;
  color: #111;
}

.frozen {
  height: 34px;
  position: relative;
  z-index: 1;
  line-height: 32px;
  border-bottom: 1px solid #a8a8a8;
}

.rh {
  width: 49px;
  flex: none;
  text-align: center;
  background: #f9f9f9;
  border-right: 1px solid #d5d5d5;
  border-bottom: 1px solid #d5d5d5;
  font-weight: 500;
}
.rh.sel {
  color: #0b7a4b;
  background: #efefef;
  border-bottom: 0;
}

.c {
  width: 210px;
  flex: none;
  padding-left: 4px;
  overflow: hidden;
  white-space: pre;
  border-right: 1px solid #d8d8d8;
  border-bottom: 1px solid #d8d8d8;
}
.c.g {
  width: 119px;
  border-right: 0;
}
.c.wide {
  width: 329px;
  border-right: 0;
}
.c.num {
  text-align: right;
  padding: 0 4px 0 0;
}
.c.cjk {
  font-size: 25px;
  font-weight: 300;
  line-height: 29px;
  padding-left: 4px;
  word-spacing: 1px;
}

/* the Mac font centres these marks */
.mid {
  display: inline-block;
  font-style: normal;
  transform: translateX(.3em);
}
.lat {
  font-weight: 400;
  font-size: 23.200px;
}

.a1 {
  position: relative;
  border: 2px solid #0b7a4b;
  border-bottom: 0;
  line-height: 29px;
  margin-left: -1px;
  width: 211px;
  padding-left: 3px;
  overflow: visible;
}
.a1::after {
  content: "";
  position: absolute;
  right: -3px;
  bottom: 0;
  width: 5px;
  height: 5px;
  background: #0b7a4b;
  border: 1px solid #fff;
}

.sheet {
  flex: 1;
  min-height: 0;
  overflow: hidden;
  background: #fff;
}

.partial {
  height: 11px;
  align-items: flex-end;
}
.partial > div { height: 33px; flex: none; }

.shade .c {
  background: #eaf0f0;
  border-color: #eaf0f0;
}

/* sheet tabs */
.sheetbar {
  height: 26px;
  flex: none;
  display: flex;
  background: #eee;
  border-top: 1px solid #cfcfcf;
  font-size: 11.500px;
}

.nav {
  width: 61px;
  padding: 3px 0 0 15px;
  display: flex;
  align-items: center;
  gap: 15px;
}

.sheet-tab {
  width: 79px;
  height: 22px;
  text-align: center;
  line-height: 19px;
  color: #777;
  border-right: 1px solid #d8d8d8;
}
.sheet-tab.active {
  color: #0b8a50;
  font-weight: 700;
  background: #fff;
  border-right: 0;
  border-radius: 0 0 3px 3px;
  box-shadow: 0 1px 1px rgba(0,0,0,.35);
}

.sheet-add {
  width: 38px;
  height: 22px;
  text-align: center;
  font-size: 18px;
  line-height: 25px;
  color: #555;
  border-right: 1px solid #d8d8d8;
}

/* status bar */
.statusbar {
  height: 23px;
  flex: none;
  display: flex;
  align-items: center;
  padding-left: 24px;
  background: #007a47;
  color: #d8ece2;
  font-size: 12px;
}

.views {
  margin-left: auto;
  display: flex;
  height: 100%;
}
.view {
  width: 36px;
  display: flex;
  align-items: center;
  justify-content: center;
}
.view.on {
  width: 37px;
  background: #3a9668;
}
.view.last { width: 35px; }

.zoom {
  width: 212px;
  padding-left: 6px;
  display: flex;
  align-items: center;
}
.zbtn {
  width: 12px;
  text-align: center;
  font-size: 15px;
  font-weight: 700;
  line-height: 16px;
  color: #fff;
}
.track {
  width: 98px;
  height: 4px;
  margin: 0 6px;
  position: relative;
  border-radius: 2px;
  background: #005a35;
}
.tick {
  position: absolute;
  left: 48px;
  top: 0;
  width: 3px;
  height: 4px;
  background: #0b7a4b;
}
.thumb {
  position: absolute;
  left: 61px;
  top: -3px;
  width: 11px;
  height: 11px;
  border-radius: 50%;
  background: #fff;
}
.pct-label { margin-left: 16px; font-size: 12px; }
```
